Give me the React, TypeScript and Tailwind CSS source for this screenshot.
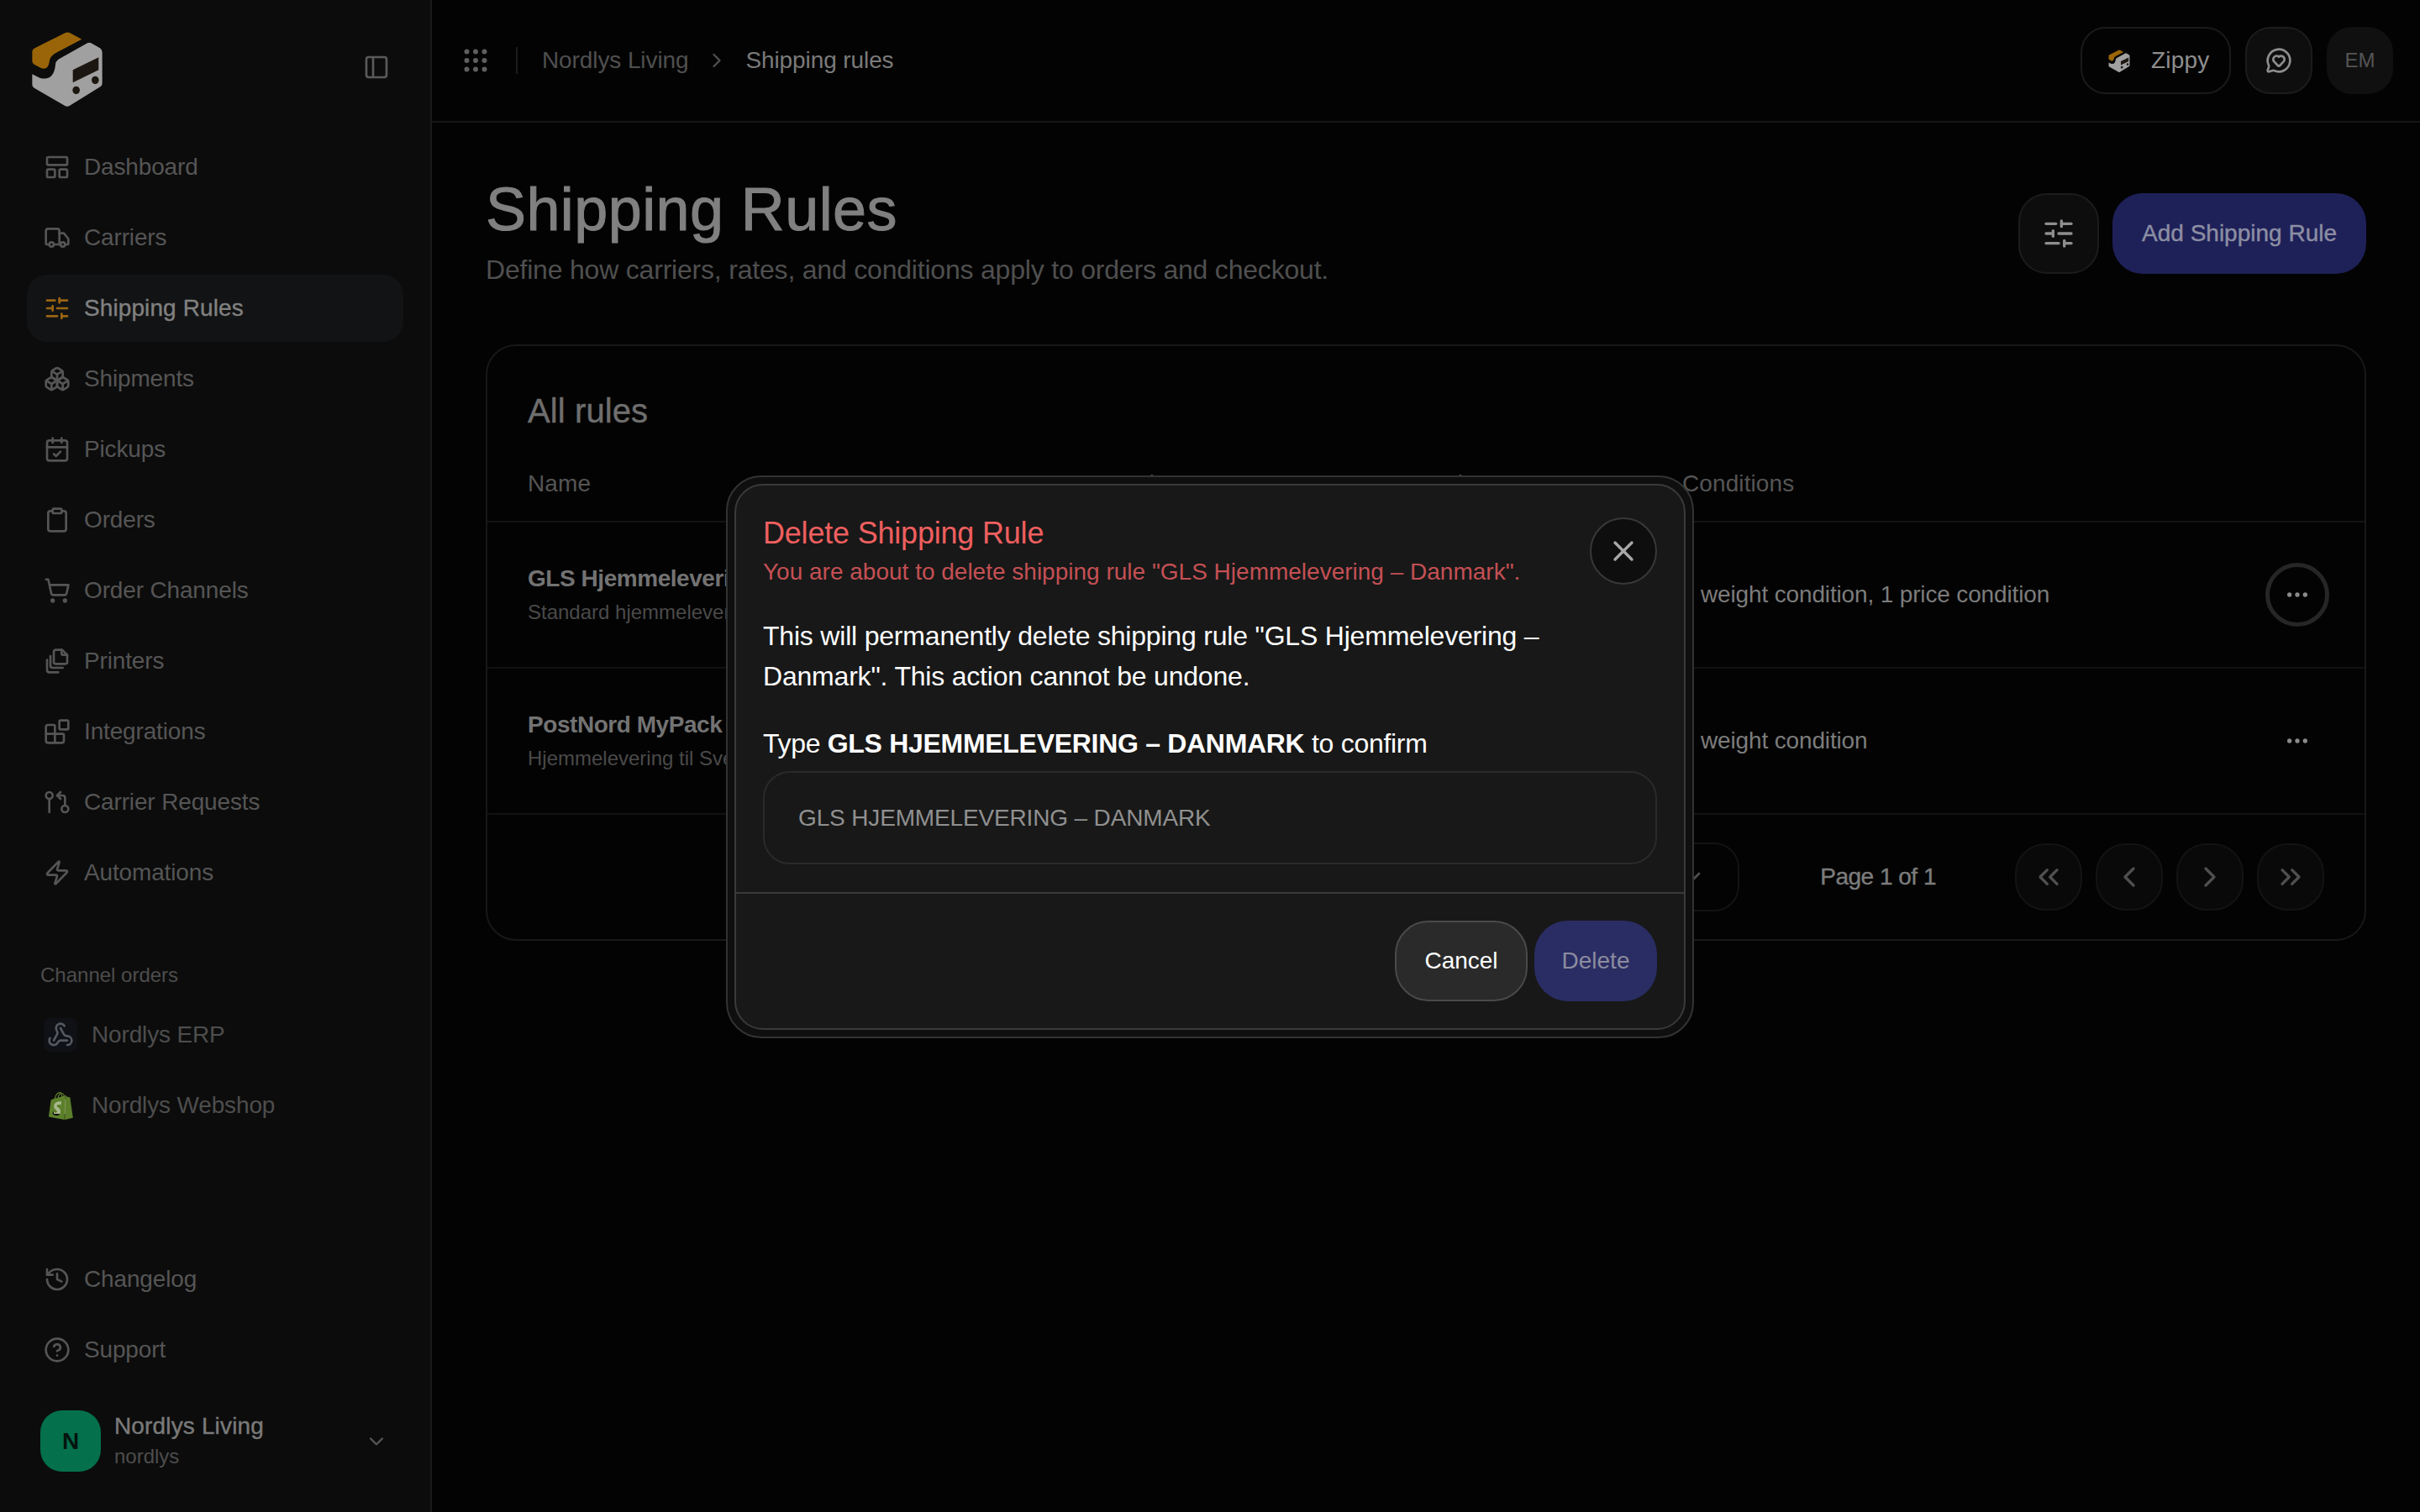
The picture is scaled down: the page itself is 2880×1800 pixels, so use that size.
import React from "react";
import {
  Truck, Boxes, CalendarCheck, Clipboard, ShoppingCart, Blocks, GitPullRequestArrow, Zap, History, CircleHelp,
  MessageCircleHeart, ChevronDown, ChevronRight, ChevronLeft, ChevronsLeft, ChevronsRight, PanelLeft, Grip,
  SlidersHorizontal, Ellipsis, X, Webhook,
} from "lucide-react";
import { SiShopify } from "react-icons/si";

function Logo({ className }: { className: string }) {
  return (
    <svg viewBox="0 0 360 360" className={className}>
      <path d="M64 112 L172 58 Q181 53 190 58 L232 80 L138 130 Q118 141 116 162 Q112 190 88 184 L62 170 Q55 165 55 158 L55 124 Q55 116 64 112 Z" fill="#9a6508" />
      <path d="M252 94 Q260 90 268 95 L297 112 Q305 117 305 126 L305 238 Q305 246 298 250 L188 318 Q180 323 172 318 L62 254 Q55 250 55 242 L55 205 L82 218 Q132 232 138 170 Q138 160 148 152 Z" fill="#a0a0a0" />
      <path d="M200 190 L292 145 L292 190 L200 235 Z" fill="#1c1610" />
      <ellipse cx="212" cy="262" rx="13" ry="14" fill="#1c1610" />
      <ellipse cx="280" cy="226" rx="13" ry="14" fill="#1c1610" />
    </svg>
  );
}

function DashboardIcon({ className }: { className: string }) {
  return (
    <svg viewBox="0 0 24 24" fill="none" stroke="currentColor" strokeWidth="2" strokeLinejoin="round" className={className}>
      <rect x="3" y="3" width="18" height="7" rx="1" />
      <rect x="3" y="14" width="7" height="7" rx="1" />
      <rect x="14" y="14" width="7" height="7" rx="1" />
    </svg>
  );
}

function PrintersIcon({ className }: { className: string }) {
  return (
    <svg viewBox="0 0 24 24" fill="none" stroke="currentColor" strokeWidth="2" strokeLinejoin="round" strokeLinecap="round" className={className}>
      <path d="M9 4a2 2 0 0 1 2-2h5.5L21 6.5V13a1.5 1.5 0 0 1-1.5 1.5h-9A1.5 1.5 0 0 1 9 13z" />
      <path d="M16 2v3.5a1 1 0 0 0 1 1h4" />
      <path d="M6 7.5V16a2 2 0 0 0 2 2h9" />
      <path d="M3 11v9a2 2 0 0 0 2 2h8" />
    </svg>
  );
}

function NavRow({ icon, label, active }: { icon: React.ReactNode; label: string; active?: boolean }) {
  return (
    <div className={active
      ? "flex h-[80px] items-center gap-[16px] rounded-[24px] bg-[#121314] pl-[20px] text-[28px] tracking-[0.1px] text-[#808080] [-webkit-text-stroke:0.4px_#808080]"
      : "flex h-[80px] items-center gap-[16px] rounded-[24px] pl-[20px] text-[28px] tracking-[-0.15px] text-[#555555]"}>
      {icon}
      <span>{label}</span>
    </div>
  );
}

const ic = "h-[32px] w-[32px] shrink-0 text-[#555555]";
const pagerBtn = "flex h-[80px] w-[80px] items-center justify-center rounded-[36px] border-2 border-[#131313] bg-[#090909] text-[#4f4f4f]";

function Row({ title, sub, cond, ring }: { title: string; sub: string; cond: string; ring?: boolean }) {
  return (
    <div className="flex h-[174px] items-center border-b-2 border-[#111111] pl-[48px] pr-[42px]">
      <div className="w-[1373px] shrink-0">
        <div className="text-[28px] font-bold leading-[40px] tracking-[-0.45px] text-[#737373]">{title}</div>
        <div className="mt-[2px] text-[24px] leading-[36px] text-[#4a4a4a]">{sub}</div>
      </div>
      <div className="flex-1 text-[28px] tracking-[-0.15px] text-[#7c7c7c]">{cond}</div>
      <div className={ring
        ? "flex h-[76px] w-[76px] items-center justify-center rounded-full border-[5px] border-[#262626] text-[#8a8a8a]"
        : "flex h-[76px] w-[76px] items-center justify-center rounded-full text-[#8a8a8a]"}>
        <Ellipsis className="h-[32px] w-[32px]" />
      </div>
    </div>
  );
}

export default function App() {
  return (
    <div className="relative flex h-[1800px] w-full overflow-hidden bg-[#030303] font-['Liberation_Sans',sans-serif]">
      <aside className="flex h-full w-[514px] shrink-0 flex-col border-r-2 border-[#1a1a1a] bg-[#0c0c0c] px-[32px] pb-[48px]">
        <div className="flex h-[159px] shrink-0 items-start justify-between pt-[32px]">
          <Logo className="ml-[-12px] mt-[-12px] h-[120px] w-[120px]" />
          <PanelLeft className="mr-[16px] mt-[32px] h-[32px] w-[32px] text-[#5a5a5a]" />
        </div>
        <nav className="flex flex-col gap-[4px]">
          <NavRow icon={<DashboardIcon className={ic} />} label="Dashboard" />
          <NavRow icon={<Truck className={ic} />} label="Carriers" />
          <NavRow active icon={<SlidersHorizontal className="h-[32px] w-[32px] shrink-0 text-[#9a6514]" />} label="Shipping Rules" />
          <NavRow icon={<Boxes className={ic} />} label="Shipments" />
          <NavRow icon={<CalendarCheck className={ic} />} label="Pickups" />
          <NavRow icon={<Clipboard className={ic} />} label="Orders" />
          <NavRow icon={<ShoppingCart className={ic} />} label="Order Channels" />
          <NavRow icon={<PrintersIcon className={ic} />} label="Printers" />
          <NavRow icon={<Blocks className={ic} />} label="Integrations" />
          <NavRow icon={<GitPullRequestArrow className={ic} />} label="Carrier Requests" />
          <NavRow icon={<Zap className={ic} />} label="Automations" />
        </nav>
        <div className="mt-[64px] pl-[16px] text-[24px] leading-[36px] tracking-[0px] text-[#4d4d4d]">Channel orders</div>
        <div className="mt-[13px] flex flex-col gap-[4px]">
          <div className="flex h-[80px] items-center gap-[17px] pl-[20px] text-[28px] tracking-[-0.15px] text-[#4d4d4d]">
            <span className="flex h-[40px] w-[40px] items-center justify-center rounded-[8px] bg-[#0f1116]">
              <Webhook className="h-[32px] w-[32px] text-[#55585f]" />
            </span>
            <span>Nordlys ERP</span>
          </div>
          <div className="flex h-[80px] items-center gap-[17px] pl-[20px] text-[28px] tracking-[-0.15px] text-[#4d4d4d]">
            <span className="relative flex h-[40px] w-[40px] items-center justify-center">
              <span className="absolute left-[12px] top-[12px] h-[18px] w-[14px] bg-[#aab88e]" />
              <SiShopify className="relative h-[33px] w-[33px] text-[#5c7f2b]" />
            </span>
            <span>Nordlys Webshop</span>
          </div>
        </div>
        <div className="mt-auto flex flex-col gap-[4px]">
          <NavRow icon={<History className={ic} />} label="Changelog" />
          <NavRow icon={<CircleHelp className={ic} />} label="Support" />
        </div>
        <div className="mt-[32px] flex items-center pl-[16px]">
          <div className="flex h-[73px] w-[72px] items-center justify-center rounded-[26px] bg-[#04704c] text-[28px] font-bold text-[#04140e]">N</div>
          <div className="ml-[16px] flex-1">
            <div className="text-[28px] leading-[36px] tracking-[0.15px] text-[#7a7a7a] [-webkit-text-stroke:0.4px_#7a7a7a]">Nordlys Living</div>
            <div className="text-[24px] leading-[36px] text-[#4d4d4d]">nordlys</div>
          </div>
          <ChevronDown className="mr-[18px] h-[28px] w-[28px] text-[#555555]" />
        </div>
      </aside>

      <main className="flex h-full min-w-0 flex-1 flex-col">
        <header className="flex h-[146px] shrink-0 items-center border-b-2 border-[#151515] pl-[34px] pr-[32px]">
          <Grip className="h-[36px] w-[36px] text-[#5f5f5f]" />
          <span className="ml-[30px] h-[32px] w-[2px] bg-[#1c1c1c]" />
          <span className="ml-[29px] text-[28px] tracking-[-0.1px] text-[#4f4f4f]">Nordlys Living</span>
          <ChevronRight className="ml-[20px] h-[28px] w-[28px] text-[#4f4f4f]" />
          <span className="ml-[20px] text-[28px] tracking-[-0.1px] text-[#7a7a7a]">Shipping rules</span>
          <div className="ml-auto flex items-center gap-[17px]">
            <div className="flex h-[80px] w-[179px] items-center rounded-[30px] border-2 border-[#1a1a1a] pl-[26px]">
              <Logo className="h-[36px] w-[36px]" />
              <span className="ml-[20px] text-[28px] tracking-[0.2px] text-[#8e8e8e]">Zippy</span>
            </div>
            <div className="flex h-[80px] w-[80px] items-center justify-center rounded-[30px] border-2 border-[#1c1c1c] bg-[#0e0e0e]">
              <MessageCircleHeart className="h-[32px] w-[32px] text-[#8e8e8e]" />
            </div>
            <div className="flex h-[80px] w-[79px] items-center justify-center rounded-[30px] bg-[#101010] text-[24px] text-[#555555]">EM</div>
          </div>
        </header>

        <div className="flex flex-1 flex-col px-[64px]">
          <div className="flex items-start justify-between pt-[63px]">
            <div>
              <h1 className="text-[72px] leading-[80px] tracking-[0.4px] text-[#808080] [-webkit-text-stroke:1px_#808080]">Shipping Rules</h1>
              <p className="mt-[8px] text-[32px] leading-[48px] tracking-[-0.2px] text-[#4f4f4f]">Define how carriers, rates, and conditions apply to orders and checkout.</p>
            </div>
            <div className="mt-[21px] flex items-center gap-[16px]">
              <div className="flex h-[96px] w-[96px] items-center justify-center rounded-[34px] border-2 border-[#1c1c1c] bg-[#0d0d0d]">
                <SlidersHorizontal className="h-[40px] w-[40px] text-[#8e8e8e]" />
              </div>
              <div className="flex h-[96px] items-center rounded-[36px] bg-[#1e2058] px-[35px] text-[28px] text-[#8c8ea3] [-webkit-text-stroke:0.4px_#8c8ea3]">Add Shipping Rule</div>
            </div>
          </div>

          <section className="mt-[65px] rounded-[36px] border-2 border-[#181818]">
            <div className="pl-[48px] pt-[49px] text-[40px] leading-[56px] tracking-[0.1px] text-[#6e6e6e] [-webkit-text-stroke:0.4px_#6e6e6e]">All rules</div>
            <div className="flex h-[105px] items-center border-b-2 border-[#131313] pl-[48px] pt-[15px] text-[28px] tracking-[0.1px] text-[#555555]">
              <span className="w-[685px]">Name</span>
              <span className="w-[337px]">Carrier</span>
              <span className="w-[352px]">Countries</span>
              <span>Conditions</span>
            </div>
            <Row ring title="GLS Hjemmelevering – Danmark" sub="Standard hjemmelevering i Danmark" cond="1 weight condition, 1 price condition" />
            <Row title="PostNord MyPack Home" sub="Hjemmelevering til Sverige" cond="1 weight condition" />
            <div className="flex h-[148px] items-center justify-end gap-[96px] pr-[48px]">
              <div className="flex h-[82px] w-[200px] items-center justify-end rounded-[30px] border-2 border-[#131313] pr-[38px] text-[#4f4f4f]">
                <ChevronDown className="h-[32px] w-[32px]" />
              </div>
              <span className="mr-[-2px] text-[28px] tracking-[-0.5px] text-[#7c7c7c] [-webkit-text-stroke:0.4px_#7c7c7c]">Page 1 of 1</span>
              <div className="flex gap-[16px]">
                <div className={pagerBtn}><ChevronsLeft className="h-[40px] w-[40px]" /></div>
                <div className={pagerBtn}><ChevronLeft className="h-[40px] w-[40px]" /></div>
                <div className={pagerBtn}><ChevronRight className="h-[40px] w-[40px]" /></div>
                <div className={pagerBtn}><ChevronsRight className="h-[40px] w-[40px]" /></div>
              </div>
            </div>
          </section>
        </div>
      </main>

      <div className="absolute inset-0 flex items-center justify-center pt-[2px]">
        <div className="w-[1152px] rounded-[42px] border-2 border-[#333333] bg-[#0f0f0f] p-[8px]">
          <div className="relative rounded-[34px] border-2 border-[#3a3a3a] bg-[#181818]">
            <div className="px-[32px] pt-[33px]">
              <div className="text-[36px] leading-[48px] tracking-[-0.2px] text-[#ef5f5f]">Delete Shipping Rule</div>
              <div className="text-[28px] leading-[44px] tracking-[0px] text-[#c45054]">You are about to delete shipping rule "GLS Hjemmelevering – Danmark".</div>
              <p className="mt-[30px] w-[960px] text-[32px] leading-[48px] tracking-[-0.2px] text-white">This will permanently delete shipping rule "GLS Hjemmelevering – Danmark". This action cannot be undone.</p>
              <p className="mt-[32px] text-[32px] leading-[48px] tracking-[-0.3px] text-white">Type <strong className="font-bold">GLS HJEMMELEVERING – DANMARK</strong> to confirm</p>
              <div className="mt-[9px] flex h-[111px] items-center rounded-[32px] border-2 border-[#2a2a2a] pl-[40px] text-[28px] tracking-[-0.15px] text-[#909090]">GLS HJEMMELEVERING – DANMARK</div>
            </div>
            <div className="mt-[33px] flex justify-end gap-[8px] border-t-2 border-[#3a3a3a] p-[32px]">
              <div className="flex h-[96px] w-[158px] items-center justify-center rounded-[40px] border-2 border-[#4a4a4a] bg-[#2a2a2a] text-[28px] text-white">Cancel</div>
              <div className="flex h-[96px] w-[146px] items-center justify-center rounded-[40px] bg-[#2a2d63] text-[28px] text-[#8b8c9f]">Delete</div>
            </div>
            <div className="absolute right-[32px] top-[38px] flex h-[80px] w-[80px] items-center justify-center rounded-full border-2 border-[#383838] bg-[#0e0e0e]">
              <X className="h-[40px] w-[40px] text-[#a8a8a8]" />
            </div>
          </div>
        </div>
      </div>
    </div>
  );
}
